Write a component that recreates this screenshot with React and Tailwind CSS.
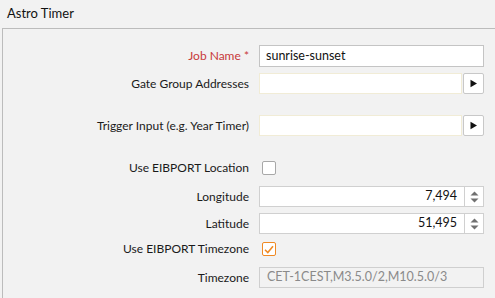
import React from "react";

const font = { fontFamily: 'Lato, "Open Sans", sans-serif' };

function Label({ children, red }) {
  return (
    <div
      className={`w-[256px] shrink-0 pr-[10px] text-right text-[12px] leading-none ${red ? "text-[#c8393b]" : "text-[#1a1a1a]"}`}
    >
      {children}
    </div>
  );
}

function Arrow() {
  return (
    <svg width="9" height="9" viewBox="0 0 9 9">
      <path d="M1.5 0.8 L8 4.5 L1.5 8.2 Z" fill="#111" />
    </svg>
  );
}

function Spin() {
  return (
    <div className="flex h-full w-[19px] flex-col items-center justify-center gap-[2px] border-l border-[#d0d0d0]">
      <svg width="9" height="5" viewBox="0 0 9 5">
        <path d="M0.5 4.5 L4.5 0.5 L8.5 4.5 Z" fill="#707070" />
      </svg>
      <svg width="9" height="5" viewBox="0 0 9 5">
        <path d="M0.5 0.5 L4.5 4.5 L8.5 0.5 Z" fill="#707070" />
      </svg>
    </div>
  );
}

export default function App() {
  return (
    <div className="h-[298px] w-[495px] overflow-hidden bg-[#f2f2f2]" style={font}>
      <div className="flex h-[28px] items-center pl-[7px] text-[13px] text-[#111]">Astro Timer</div>
      <div className="ml-[2px] h-[300px] w-[520px] border-l border-t border-[#bcbcbc] pt-[16px]">
        {/* Job Name */}
        <div className="flex h-[22px] items-center">
          <Label red>Job Name *</Label>
          <div className="flex h-[22px] w-[225px] items-center border border-[#c4c4c4] bg-white pl-[6px] text-[12.5px] text-[#111]">
            sunrise-sunset
          </div>
        </div>
        {/* Gate Group */}
        <div className="mt-[6px] flex h-[21px] items-center">
          <Label>Gate Group Addresses</Label>
          <div className="h-[21px] w-[203px] border border-[#f1ecd6] bg-white" />
          <div className="ml-[1px] flex h-[21px] w-[21px] items-center justify-center rounded-[2px] border border-[#c8c8c8] bg-white">
            <Arrow />
          </div>
        </div>
        {/* Trigger */}
        <div className="mt-[21px] flex h-[21px] items-center">
          <Label>Trigger Input (e.g. Year Timer)</Label>
          <div className="h-[21px] w-[203px] border border-[#f1ecd6] bg-white" />
          <div className="ml-[1px] flex h-[21px] w-[21px] items-center justify-center rounded-[2px] border border-[#c8c8c8] bg-white">
            <Arrow />
          </div>
        </div>
        {/* Use EIBPORT Location */}
        <div className="mt-[22px] flex h-[20px] items-center">
          <Label>Use EIBPORT Location</Label>
          <div className="ml-[3px] h-[14px] w-[14px] rounded-[2px] border border-[#a8a8a8] bg-white" />
        </div>
        {/* Longitude */}
        <div className="mt-[8px] flex h-[21px] items-center">
          <Label>Longitude</Label>
          <div className="flex h-[21px] w-[225px] items-center border border-[#d0d0d0] bg-white">
            <div className="flex-1 pr-[7px] text-right text-[12.5px] text-[#111]">7,494</div>
            <Spin />
          </div>
        </div>
        {/* Latitude */}
        <div className="mt-[6px] flex h-[21px] items-center">
          <Label>Latitude</Label>
          <div className="flex h-[21px] w-[225px] items-center border border-[#d0d0d0] bg-white">
            <div className="flex-1 pr-[7px] text-right text-[12.5px] text-[#111]">51,495</div>
            <Spin />
          </div>
        </div>
        {/* Use EIBPORT Timezone */}
        <div className="mt-[5px] flex h-[20px] items-center">
          <Label>Use EIBPORT Timezone</Label>
          <div className="ml-[3px] flex h-[14px] w-[14px] items-center justify-center rounded-[2px] border border-[#f08a24] bg-white">
            <svg width="10" height="9" viewBox="0 0 10 9">
              <path d="M1 4.8 L3.8 7.6 L9 1.2" fill="none" stroke="#f08a24" strokeWidth="1.6" />
            </svg>
          </div>
        </div>
        {/* Timezone */}
        <div className="mt-[8px] flex h-[21px] items-center">
          <Label>Timezone</Label>
          <div className="flex h-[21px] w-[225px] items-center border border-[#cfcfcf] bg-[#f2f2f2] pl-[7px] text-[12.5px] text-[#8a8a8a]">
            CET-1CEST,M3.5.0/2,M10.5.0/3
          </div>
        </div>
      </div>
    </div>
  );
}
